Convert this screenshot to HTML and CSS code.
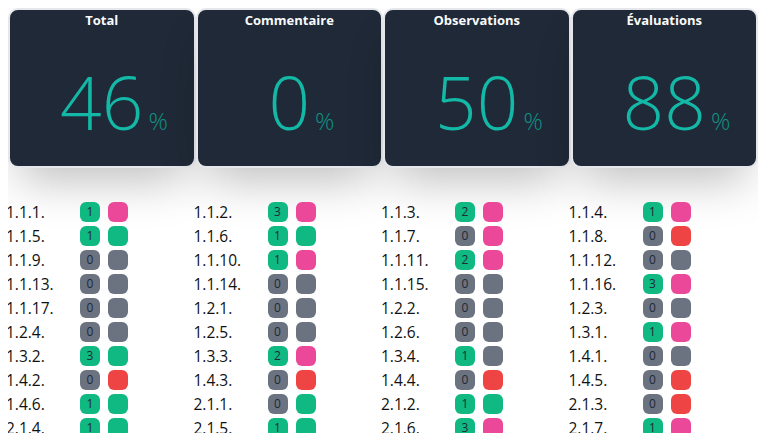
FILE: index.html
```html
<!DOCTYPE html>
<html lang="fr">
<head>
<meta charset="utf-8">
<link rel="stylesheet" href="styles.css">
</head>
<body>
<div class="cards">
  <div class="card"><div class="card-title">Total</div><div class="card-value"><span class="num">46</span><span class="pct">%</span></div></div>
  <div class="card"><div class="card-title">Commentaire</div><div class="card-value"><span class="num">0</span><span class="pct">%</span></div></div>
  <div class="card"><div class="card-title">Observations</div><div class="card-value"><span class="num">50</span><span class="pct">%</span></div></div>
  <div class="card"><div class="card-title">Évaluations</div><div class="card-value"><span class="num">88</span><span class="pct">%</span></div></div>
</div>
<div class="list">
  <div class="item"><span class="label">1.1.1.</span><span class="b green">1</span><span class="b pink"></span></div>
  <div class="item"><span class="label">1.1.2.</span><span class="b green">3</span><span class="b pink"></span></div>
  <div class="item"><span class="label">1.1.3.</span><span class="b green">2</span><span class="b pink"></span></div>
  <div class="item"><span class="label">1.1.4.</span><span class="b green">1</span><span class="b pink"></span></div>

  <div class="item"><span class="label">1.1.5.</span><span class="b green">1</span><span class="b green"></span></div>
  <div class="item"><span class="label">1.1.6.</span><span class="b green">1</span><span class="b green"></span></div>
  <div class="item"><span class="label">1.1.7.</span><span class="b gray">0</span><span class="b pink"></span></div>
  <div class="item"><span class="label">1.1.8.</span><span class="b gray">0</span><span class="b red"></span></div>

  <div class="item"><span class="label">1.1.9.</span><span class="b gray">0</span><span class="b gray"></span></div>
  <div class="item"><span class="label">1.1.10.</span><span class="b green">1</span><span class="b pink"></span></div>
  <div class="item"><span class="label">1.1.11.</span><span class="b green">2</span><span class="b pink"></span></div>
  <div class="item"><span class="label">1.1.12.</span><span class="b gray">0</span><span class="b gray"></span></div>

  <div class="item"><span class="label">1.1.13.</span><span class="b gray">0</span><span class="b gray"></span></div>
  <div class="item"><span class="label">1.1.14.</span><span class="b gray">0</span><span class="b gray"></span></div>
  <div class="item"><span class="label">1.1.15.</span><span class="b gray">0</span><span class="b gray"></span></div>
  <div class="item"><span class="label">1.1.16.</span><span class="b green">3</span><span class="b pink"></span></div>

  <div class="item"><span class="label">1.1.17.</span><span class="b gray">0</span><span class="b gray"></span></div>
  <div class="item"><span class="label">1.2.1.</span><span class="b gray">0</span><span class="b gray"></span></div>
  <div class="item"><span class="label">1.2.2.</span><span class="b gray">0</span><span class="b gray"></span></div>
  <div class="item"><span class="label">1.2.3.</span><span class="b gray">0</span><span class="b gray"></span></div>

  <div class="item"><span class="label">1.2.4.</span><span class="b gray">0</span><span class="b gray"></span></div>
  <div class="item"><span class="label">1.2.5.</span><span class="b gray">0</span><span class="b gray"></span></div>
  <div class="item"><span class="label">1.2.6.</span><span class="b gray">0</span><span class="b gray"></span></div>
  <div class="item"><span class="label">1.3.1.</span><span class="b green">1</span><span class="b pink"></span></div>

  <div class="item"><span class="label">1.3.2.</span><span class="b green">3</span><span class="b green"></span></div>
  <div class="item"><span class="label">1.3.3.</span><span class="b green">2</span><span class="b pink"></span></div>
  <div class="item"><span class="label">1.3.4.</span><span class="b green">1</span><span class="b gray"></span></div>
  <div class="item"><span class="label">1.4.1.</span><span class="b gray">0</span><span class="b gray"></span></div>

  <div class="item"><span class="label">1.4.2.</span><span class="b gray">0</span><span class="b red"></span></div>
  <div class="item"><span class="label">1.4.3.</span><span class="b gray">0</span><span class="b red"></span></div>
  <div class="item"><span class="label">1.4.4.</span><span class="b gray">0</span><span class="b red"></span></div>
  <div class="item"><span class="label">1.4.5.</span><span class="b gray">0</span><span class="b red"></span></div>

  <div class="item"><span class="label">1.4.6.</span><span class="b green">1</span><span class="b green"></span></div>
  <div class="item"><span class="label">2.1.1.</span><span class="b gray">0</span><span class="b green"></span></div>
  <div class="item"><span class="label">2.1.2.</span><span class="b green">1</span><span class="b green"></span></div>
  <div class="item"><span class="label">2.1.3.</span><span class="b gray">0</span><span class="b red"></span></div>

  <div class="item"><span class="label">2.1.4.</span><span class="b green">1</span><span class="b green"></span></div>
  <div class="item"><span class="label">2.1.5.</span><span class="b green">1</span><span class="b green"></span></div>
  <div class="item"><span class="label">2.1.6.</span><span class="b green">3</span><span class="b pink"></span></div>
  <div class="item"><span class="label">2.1.7.</span><span class="b green">1</span><span class="b pink"></span></div>
</div>
</body>
</html>
```
FILE: styles.css
```css
html, body {
  overflow: hidden;
}
body {
  margin: 8px;
  background: #ffffff;
  font-family: "Open Sans", "Noto Sans", sans-serif;
  color: #111827;
}
.cards {
  display: grid;
  grid-template-columns: repeat(4, 1fr);
}
.card {
  height: 160px;
  box-sizing: border-box;
  background: #1f2937;
  border: 2px solid #e5e7eb;
  border-radius: 10px;
  box-shadow: 0 25px 45px -12px rgba(0, 0, 0, 0.25);
  display: flex;
  flex-direction: column;
  align-items: center;
}
.card-title {
  color: #f9fafb;
  font-size: 13px;
  font-weight: 700;
  line-height: 20px;
}
.card-value {
  margin-top: 36px;
  line-height: 72px;
  display: flex;
  align-items: baseline;
  color: #14b8a6;
}
.num {
  font-size: 73px;
  font-weight: 350;
}
.pct {
  font-size: 24px;
  font-weight: 350;
  color: #0f9184;
  width: 0;
  margin-left: 5px;
  margin-right: -5px;
  white-space: nowrap;
}
.list {
  margin-top: 32px;
  display: grid;
  grid-template-columns: repeat(4, 1fr);
}
.item {
  display: flex;
  align-items: center;
  height: 24px;
}
.label {
  width: 74px;
  font-size: 15.5px;
  margin-left: -2px;
  color: #111111;
}
.b {
  width: 20px;
  height: 20px;
  border-radius: 6px;
  margin-right: 8px;
  font-size: 12px;
  line-height: 20px;
  text-align: center;
  color: #1f2937;
}
.green { background: #10b981; }
.pink { background: #ec4899; }
.gray { background: #6b7280; }
.red { background: #ef4444; }
```
